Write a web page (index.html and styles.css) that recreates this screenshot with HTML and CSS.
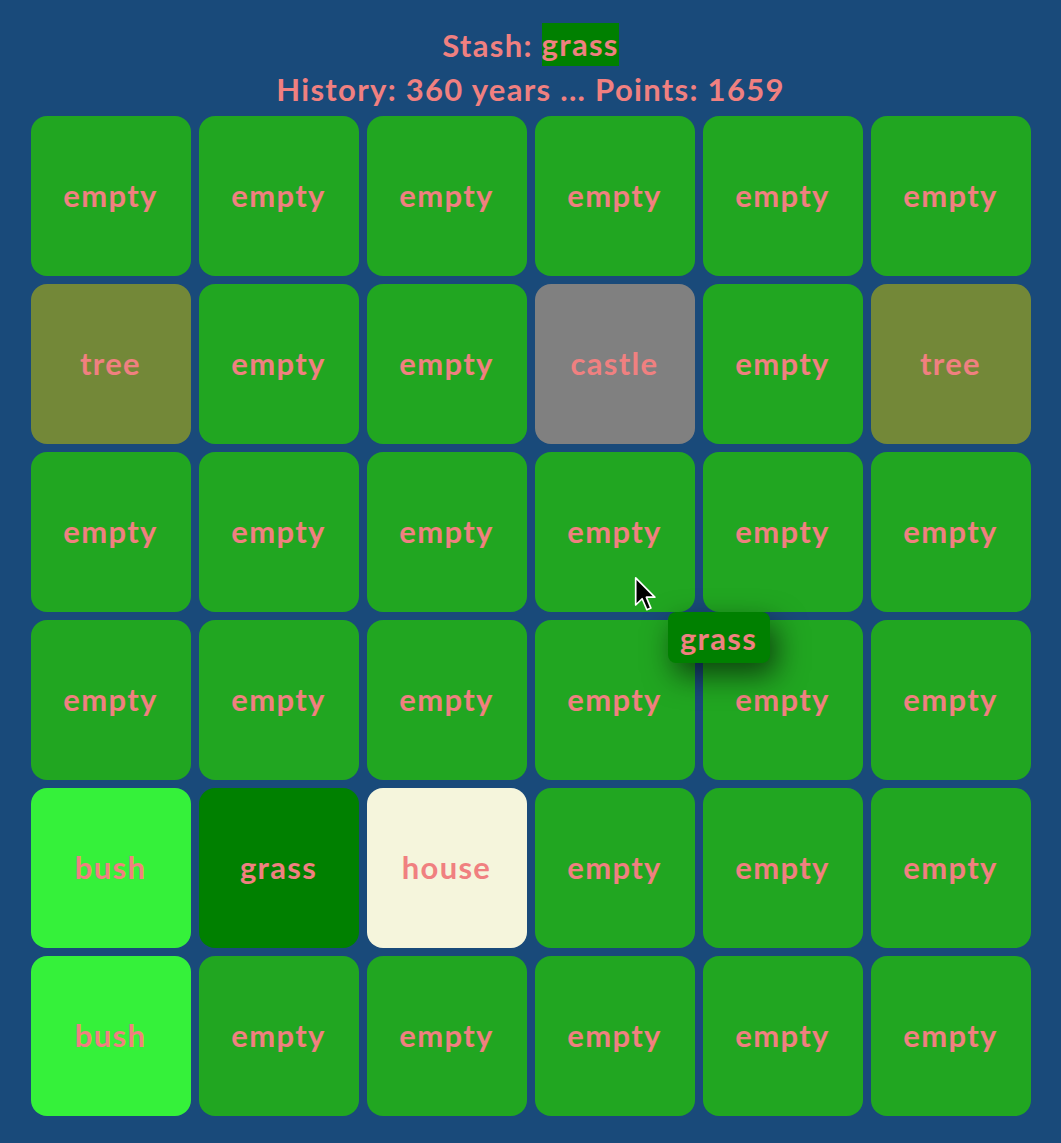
FILE: index.html
```html
<!DOCTYPE html>
<html>
<head>
<meta charset="utf-8">
<link rel="stylesheet" href="styles.css">
</head>
<body>
<div class="header">
  <div class="line">Stash: <span class="stash">grass</span></div>
  <div class="line">History: 360 years ... Points: 1659</div>
</div>
<div class="board">
  <div class="grid">
    <div class="tile empty">empty</div>
    <div class="tile empty">empty</div>
    <div class="tile empty">empty</div>
    <div class="tile empty">empty</div>
    <div class="tile empty">empty</div>
    <div class="tile empty">empty</div>

    <div class="tile tree">tree</div>
    <div class="tile empty">empty</div>
    <div class="tile empty">empty</div>
    <div class="tile castle">castle</div>
    <div class="tile empty">empty</div>
    <div class="tile tree">tree</div>

    <div class="tile empty">empty</div>
    <div class="tile empty">empty</div>
    <div class="tile empty">empty</div>
    <div class="tile empty">empty</div>
    <div class="tile empty">empty</div>
    <div class="tile empty">empty</div>

    <div class="tile empty">empty</div>
    <div class="tile empty">empty</div>
    <div class="tile empty">empty</div>
    <div class="tile empty">empty</div>
    <div class="tile empty">empty</div>
    <div class="tile empty">empty</div>

    <div class="tile bush">bush</div>
    <div class="tile grass">grass</div>
    <div class="tile house">house</div>
    <div class="tile empty">empty</div>
    <div class="tile empty">empty</div>
    <div class="tile empty">empty</div>

    <div class="tile bush">bush</div>
    <div class="tile empty">empty</div>
    <div class="tile empty">empty</div>
    <div class="tile empty">empty</div>
    <div class="tile empty">empty</div>
    <div class="tile empty">empty</div>
  </div>
  <div class="ghost">grass</div>
  <svg class="cursor" width="22" height="36" viewBox="0 0 13 21">
    <path d="M1 1 L1 17 L4.8 13.3 L7.6 19.8 L10 18.8 L7.3 12.4 L12.3 12.4 Z" fill="#000" stroke="#fff" stroke-width="1" stroke-linejoin="round"/>
  </svg>
</div>
</body>
</html>
```
FILE: styles.css
```css
html, body {
  margin: 0;
  padding: 0;
}
body {
  background: #194a7a;
  font-family: Lato, "Noto Sans", sans-serif;
  font-weight: 700;
  color: #f08080;
  width: 1061px;
  height: 1143px;
  overflow: hidden;
}
.header {
  padding-top: 23px;
  text-align: center;
  font-size: 31px;
  letter-spacing: 1.3px;
}
.line {
  height: 44px;
  line-height: 44px;
}
.stash {
  display: inline-block;
  background: #008000;
  line-height: 43px;
  height: 43px;
  vertical-align: top;
}
.board {
  position: relative;
  width: 1000px;
  margin: 5px auto 0;
}
.grid {
  display: grid;
  grid-template-columns: repeat(6, 160px);
  grid-auto-rows: 160px;
  gap: 8px;
}
.tile {
  border-radius: 16px;
  display: flex;
  align-items: center;
  justify-content: center;
  font-size: 31px;
  letter-spacing: 1.3px;
  padding-bottom: 2px;
  box-sizing: border-box;
}
.empty { background: #21a621; }
.tree { background: #738838; }
.castle { background: #808080; }
.bush { background: #35f13a; }
.grass { background: #008000; }
.house { background: #f5f5dc; }
.ghost {
  position: absolute;
  left: 637px;
  top: 496px;
  width: 102px;
  height: 51px;
  border-radius: 8px;
  background: #008000;
  display: flex;
  align-items: center;
  justify-content: center;
  font-size: 31px;
  letter-spacing: 1.3px;
  box-shadow: 6px 12px 30px rgba(0, 0, 0, 0.6);
}
.cursor {
  position: absolute;
  left: 603px;
  top: 460px;
}
```
